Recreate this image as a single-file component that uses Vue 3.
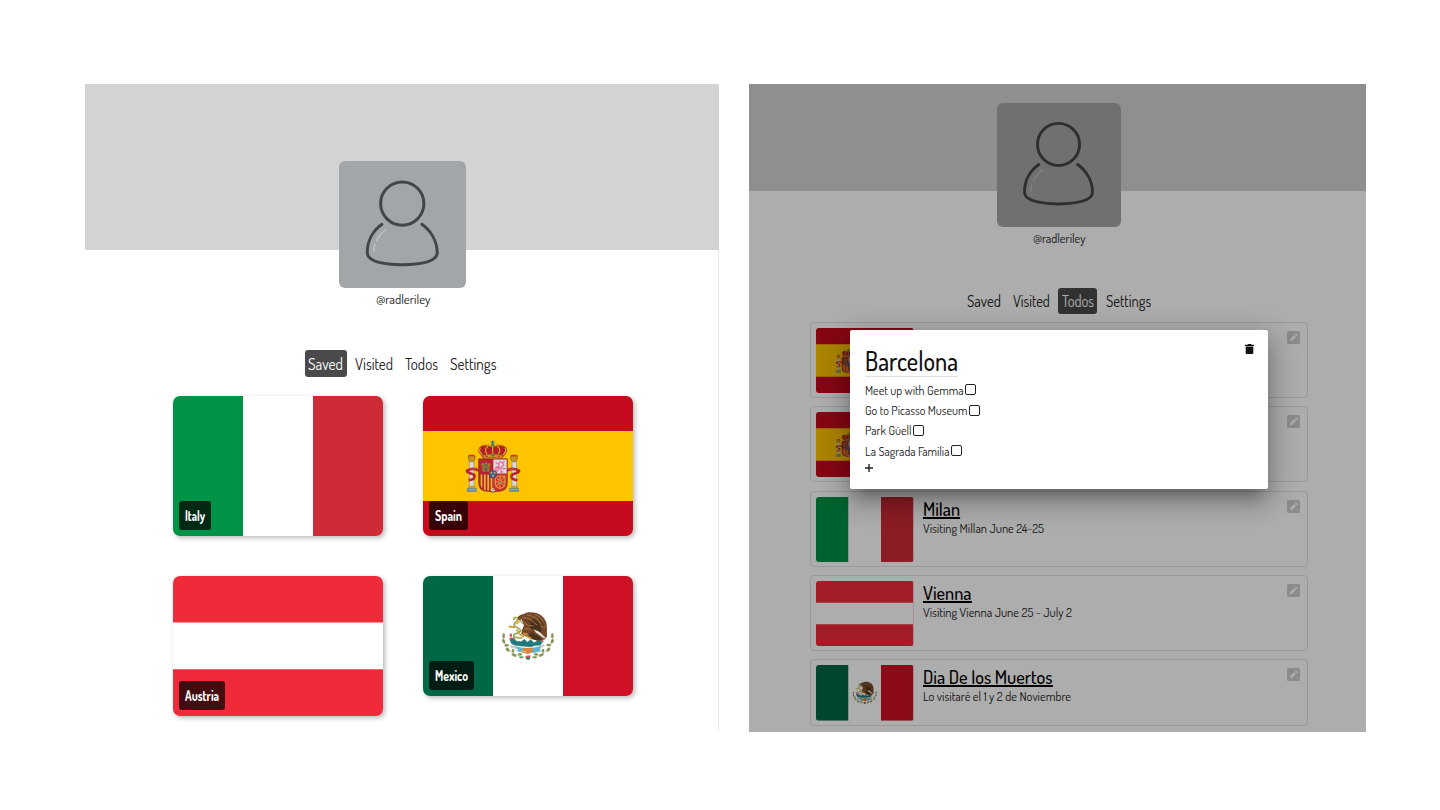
<script setup>
const tabs = [
  { name: 'Saved', width: 35 },
  { name: 'Visited', width: 38 },
  { name: 'Todos', width: 33 },
  { name: 'Settings', width: 46.5 },
]
const countries = [
  { name: 'Italy', flag: 'italy', width: 20 },
  { name: 'Spain', flag: 'spain', width: 27 },
  { name: 'Austria', flag: 'austria', width: 34 },
  { name: 'Mexico', flag: 'mexico', width: 33 },
]
const trips = [
  { flag: 'spain' },
  { flag: 'spain' },
  { flag: 'italy', title: 'Milan', tw: 37, note: 'Visiting Millan June 24-25', nw: 121 },
  { flag: 'austria', title: 'Vienna', tw: 48.5, note: 'Visiting Vienna June 25 - July 2', nw: 149 },
  { flag: 'mexico', title: 'Dia De los Muertos', tw: 129.5, note: 'Lo visitaré el 1 y 2 de Noviembre', nw: 148 },
]
const todos = [
  { text: 'Meet up with Gemma', width: 98.5 },
  { text: 'Go to Picasso Museum', width: 102.5 },
  { text: 'Park Güell', width: 46.5 },
  { text: 'La Sagrada Familia', width: 84.5 },
]

// Condenses a label so that it takes exactly the given width.
const vFit = {
  mounted(el, { value }) {
    const natural = el.getBoundingClientRect().width
    el.style.transform = `scaleX(${value / natural})`
    el.style.marginRight = `${value - natural}px`
  },
}
</script>

<template>
  <div class="stage">
    <svg class="defs" width="0" height="0">
      <symbol id="italy" viewBox="0 0 210 140" preserveAspectRatio="none">
        <path fill="#009246" d="M0 0h70v140H0z" /><path fill="#fff" d="M70 0h70v140H70z" /><path fill="#ce2b37" d="M140 0h70v140h-70z" />
      </symbol>
      <symbol id="austria" viewBox="0 0 210 140" preserveAspectRatio="none">
        <path fill="#ef2b3a" d="M0 0h210v140H0z" /><path fill="#fff" d="M0 46.6h210v46.6H0z" />
      </symbol>
      <symbol id="spain" viewBox="0 0 210 140">
        <path fill="#c60b1e" d="M0 0h210v140H0z" /><path fill="#ffc400" d="M0 35h210v70H0z" />
        <g transform="translate(-13 -11.5) scale(.33333)">
          <path fill="#c8961d" stroke="#7c4f14" stroke-width="2" d="M175 214h20v7l-4 10h-12l-4-10zM302 214h20v7l-4 10h-12l-4-10z" />
          <path fill="#c7372f" d="M177 211h16v4h-16zM304 211h16v4h-16z" />
          <path fill="#d9d9dc" stroke="#8f8f98" stroke-width="2" d="M178 232h14v74h-14zM306 232h14v74h-14z" />
          <path fill="#c29a3b" d="M174 304h22v8h-22zM302 304h22v8h-22z" />
          <path fill="#527fa6" d="M171 311h29v11h-29zM298 311h29v11h-29z" />
          <path fill="#b4d3d8" d="M173 315h25v2h-25zM300 315h25v2h-25z" />
          <path fill="none" stroke="#b6252c" stroke-width="8" d="M207 259c-9-9-28-7-36 0 2 12 26 4 22 20-2 5-11 7-17 8M291 259c9-9 28-7 36 0-2 12-26 4-22 20 2 5 11 7 17 8" />
          <path fill="none" stroke="#e48b62" stroke-width="1.5" d="M205 255c-9-3-18-3-27 2M293 255c9-3 18-3 27 2M193 277l-13 8M305 277l13 8" />
          <path fill="#b51f2b" stroke="#a8701f" stroke-width="2" d="M217 218c-5-9-14-15-10-26 7-14 27-8 40-5 13-3 34-9 43 5 4 10-5 17-11 26z" />
          <path fill="none" stroke="#dba62a" stroke-width="3.5" d="M218 213c-9-11-13-17-6-23M232 211c-8-12-7-20 2-25M248 211v-29M264 211c8-12 7-20-2-25M278 213c9-11 13-17 6-23" />
          <path fill="none" stroke="#8d3d24" stroke-width="2" stroke-dasharray="2 3" d="M212 188c8-11 26-9 35-4 10-5 28-7 37 4" />
          <path fill="#3b8174" d="M244 177h8v8h-8zM246 168h4v12h-4zM242 171h12v4h-12z" />
          <path fill="#cf9423" stroke="#8f4f21" stroke-width="2" d="M219 212q29-7 60 0l-3 10q-28-6-54 0z" />
          <path fill="#c1282c" d="M227 214h7v3h-7zM263 214h7v3h-7z" /><path fill="#28855a" d="M244 211h9v4h-9z" />
          <path fill="#b52530" stroke="#8b3422" stroke-width="2" d="M206 223h86v72q0 23-21 25-14 0-22 3-8-3-22-3-21-2-21-25z" />
          <path fill="#ded8df" d="M250 225h40v42h-40z" />
          <path fill="#edb727" d="M212 270h5v41l-5-8zM222 270h5v47l-5-1zM232 270h5v48h-5zM242 270h5v47l-5 1z" />
          <path fill="#c93635" d="M250 269h40v27q-1 19-21 22-13-1-19-7z" />
          <path fill="none" stroke="#e2a437" stroke-width="3" d="M256 275h29v23q-2 13-15 14-13-2-14-13zM256 275l29 31M285 275l-28 32M270 274v39M255 292h31" />
          <circle cx="270" cy="292" r="3" fill="#388b55" />
          <path fill="#8f7531" stroke="#c89129" stroke-width="1.5" d="M218 260v-13l-3-4v-6h5v4h5v-6h6v6h5v-4h4v6l-3 4v13z" />
          <path fill="#315d83" d="M223 241h10v3h-10zM226 250h5v10h-5z" />
          <path fill="none" stroke="#df769e" stroke-width="4" d="M257 234l8 5 5-7 8 2 3 8-8 6 8 5 6-1M266 239l2 11-11-4M269 249l-6 10-7-3M272 252l1 11 7-1M254 252l10-2M278 238l5-8" />
          <circle cx="249" cy="269" r="12" fill="#285fa5" stroke="#ae2938" stroke-width="2" />
          <path fill="#e6b737" d="M244 260l3 5-3 4-3-4zM254 260l3 5-3 4-3-4zM249 269l3 5-3 5-3-5z" />
          <path fill="#e8e1d7" d="M242 318l7-8 7 8-7 4z" /><path fill="#38865a" d="M247 314h4v4h-4z" />
        </g>
      </symbol>
      <symbol id="mexico" viewBox="0 0 210 120">
        <path fill="#006847" d="M0 0h70v120H0z" /><path fill="#fff" d="M70 0h70v120H70z" /><path fill="#ce1126" d="M140 0h70v120h-70z" />
        <g transform="translate(-13 -11) scale(.33333)">
          <path fill="none" stroke="#b3b787" stroke-width="2" d="M281 208c-4 34 20 61 60 69M427 208c4 34-20 61-60 69" />
          <g fill="#8a955a">
            <ellipse cx="281" cy="212" rx="4" ry="8" /><ellipse cx="281" cy="229" rx="4.5" ry="7" transform="rotate(-30 281 229)" /><ellipse cx="290" cy="241" rx="7" ry="4" /><ellipse cx="293" cy="254" rx="7" ry="4.5" transform="rotate(40 293 254)" /><ellipse cx="309" cy="257" rx="4" ry="6" /><ellipse cx="312" cy="270" rx="8" ry="4.5" transform="rotate(25 312 270)" /><ellipse cx="330" cy="268" rx="6" ry="4" /><ellipse cx="334" cy="277" rx="7" ry="3.5" />
            <ellipse cx="427" cy="212" rx="4" ry="8" /><ellipse cx="427" cy="229" rx="4.5" ry="7" transform="rotate(30 427 229)" /><ellipse cx="416" cy="240" rx="7" ry="4" /><ellipse cx="415" cy="254" rx="7" ry="4.5" transform="rotate(-40 415 254)" /><ellipse cx="399" cy="257" rx="4" ry="6" /><ellipse cx="394" cy="270" rx="8" ry="4.5" transform="rotate(-25 394 270)" /><ellipse cx="378" cy="268" rx="6" ry="4" /><ellipse cx="374" cy="277" rx="7" ry="3.5" />
          </g>
          <path fill="#c4d0c8" d="M303 240q50 18 98-2l4 6q-54 24-105 3z" />
          <path fill="#1e7d7c" stroke="#17635f" stroke-width="1.5" d="M302 219q13-1 17 10l15 1 9-7 9 9 10-8 10 10 12-8 12 4-4 10-15 1-15 4-28-2-18-2-11-5-5-11z" />
          <path fill="#58b6d3" d="M314 244l22 5h35l23-5-5 12 8 2-23 5H340l-23-5 9-3z" />
          <path fill="#dc843d" d="M338 249h31l-2 13-13 5-16-4z" /><path fill="#e7ba56" d="M333 258h16v4h-16z" />
          <path fill="#dc5260" d="M299 206h7v9h-7zM296 220l8-3v8zM309 217h6v7h-6zM397 226l5 4-7 3zM347 272l14-1-3 13h-8z" />
          <path fill="#2b8a62" d="M345 274l8 5 9-5-3 9h-10z" />
          <path fill="#74492a" d="M323 157c4-9 19-9 26-14 25-5 49 4 58 25 6 14 3 32 4 46l-5 9-20 4-24-5-16-9-12-6 2-12 6-14-5-13-13-3z" />
          <path fill="#49321f" d="M367 161q18 4 25 25l2 17-20-9-14-2 1-14zM358 205l22 4 20 18-22-1-18-9z" />
          <path fill="none" stroke="#a07242" stroke-width="3" d="M337 157l23 5 22 19M351 150q28 3 44 28M375 147q18 9 26 25M341 174l15 8 18 1M343 191l20 2M394 185l13 1" />
          <path fill="none" stroke="#33251a" stroke-width="2" d="M345 164l17 8 14 17M388 160l13 24M362 200l13 8M331 169l11 9" />
          <path fill="#e9e2d8" d="M371 193l18 8 22 22-14-6-20-15z" />
          <path fill="none" stroke="#9caa55" stroke-width="5" d="M311 165c2-11 13-9 12-1-3 8-12 8-11 16 2 9 18 8 20 16 0 9-13 7-20 13-5 7 9 10 25 10" />
          <path fill="none" stroke="#cf9b2f" stroke-width="5" d="M319 177q5-7 8-6M296 185q15 2 20 1M319 194l10 8M327 206l15 10M350 213l14 8M339 205l14 4" />
          <path fill="#e4b840" d="M318 169l10-4 2 7-8 3-7 6z" /><circle cx="334" cy="165" r="2" fill="#fff" />
        </g>
      </symbol>
      <symbol id="person" viewBox="57 30 383 383">
        <g fill="none" stroke="#444548" stroke-width="9" stroke-linecap="round">
          <circle cx="247" cy="158" r="65" />
          <path d="M186 220C158 240 141 272 142 307Q145 340 247 342Q349 340 352 307C352 272 334 240 306 220" />
        </g>
        <path d="M198 236Q178 252 170 270M165 281Q160 293 161 303" fill="none" stroke="#bfc3c5" stroke-width="4" stroke-linecap="round" />
      </symbol>
    </svg>

    <section class="panel saved">
      <header class="banner" />
      <div class="avatar"><svg><use href="#person" /></svg></div>
      <div class="handle"><span v-fit="54.5" class="fit">@radleriley</span></div>
      <nav>
        <a v-for="t in tabs" :key="t.name" :class="{ active: t.name === 'Saved' }"><span v-fit="t.width" class="fit">{{ t.name }}</span></a>
      </nav>
      <div class="grid">
        <article v-for="c in countries" :key="c.name" class="country" :class="c.flag">
          <svg><use :href="'#' + c.flag" /></svg>
          <span class="tag"><span v-fit="c.width" class="fit">{{ c.name }}</span></span>
        </article>
      </div>
    </section>

    <section class="panel trips">
      <header class="banner" />
      <div class="avatar"><svg><use href="#person" /></svg></div>
      <div class="handle"><span v-fit="52.5" class="fit">@radleriley</span></div>
      <nav>
        <a v-for="t in tabs" :key="t.name" :class="{ active: t.name === 'Todos' }"><span v-fit="t.width * 0.97" class="fit">{{ t.name }}</span></a>
      </nav>
      <div class="list">
        <article v-for="(t, i) in trips" :key="i" class="trip" :class="t.flag">
          <svg class="flag"><use :href="'#' + t.flag" /></svg>
          <div v-if="t.title" class="info">
            <h3><span v-fit="t.tw" class="fit">{{ t.title }}</span></h3>
            <p><span v-fit="t.nw" class="fit">{{ t.note }}</span></p>
          </div>
          <svg class="edit" viewBox="0 0 13 13">
            <rect width="13" height="13" rx="1.6" fill="#cecece" />
            <path d="M2.8 10.3l.5-2.3 3.9-3.9 1.8 1.8-3.9 3.9zM7.8 3.5l.8-.8q.4-.3.8 0l1 1q.3.4 0 .8l-.8.8z" fill="#fff" />
          </svg>
        </article>
      </div>
      <div class="overlay">
        <div class="modal">
          <div class="body">
            <h2><span v-fit="93" class="fit">Barcelona</span></h2>
            <div v-for="t in todos" :key="t.text" class="todo">
              <span v-fit="t.width" class="fit">{{ t.text }}</span><i class="box" />
            </div>
            <svg class="plus" viewBox="0 0 8 8"><path d="M4 0v8M0 4h8" stroke="#222" stroke-width="1.4" /></svg>
          </div>
          <svg class="trash" viewBox="0 0 9 10"><path d="M0 .7h2.5L3.1 0h2.8l.6.7H9v1.2H0zM.7 2.5h7.6V9q0 1-1 1H1.7q-1 0-1-1z" fill="#111" /></svg>
        </div>
      </div>
    </section>
  </div>
</template>

<style>
body { background: #fff; }
</style>

<style scoped>
* { box-sizing: border-box; }
.stage { display: flex; align-items: flex-start; gap: 30px; width: 1440px; height: 810px; padding: 84px 0 0 85px; overflow: hidden; font-family: Dosis, Lato, sans-serif; color: #222; }
.defs { position: absolute; }
.fit { display: inline-block; white-space: nowrap; transform-origin: left; }
.panel { position: relative; display: flex; flex-direction: column; align-items: center; background: #fff; overflow: hidden; flex: none; }
.panel svg { display: block; }
.saved { width: 634px; height: 647px; box-shadow: inset -1px 0 #ededed; }
.trips { width: 617px; height: 648px; }
.banner { width: 634px; height: 166px; background: #d3d3d3; flex: none; }
.trips .banner { width: 617px; height: 106.5px; }
.avatar { width: 127.5px; height: 127.5px; margin: -89.5px 0 0 1px; border-radius: 6px; background: #a2a6a9; z-index: 1; flex: none; }
.avatar svg { width: 100%; height: 100%; }
.trips .avatar { width: 124px; height: 124px; margin: -87.3px 0 0 2px; }
.handle { height: 20px; margin: 1px 0 0 2px; font-size: 12.8px; line-height: 20px; }
.trips .handle { margin: .8px 0 0 3px; font-size: 12.5px; }
nav { display: flex; gap: 5px; margin: 41px 0 0 1px; height: 27px; flex: none; }
nav a { padding: 0 3.5px; line-height: 27px; font-size: 16.5px; border-radius: 3px; white-space: nowrap; }
nav a.active { background: #4a4a4a; color: #fff; }
.trips nav { margin: 40px 0 0 3px; height: 26px; gap: 5px; }
.trips nav a { line-height: 26px; font-size: 16px; }
.grid { display: grid; grid-template-columns: 210px 210px; gap: 40px 39.6px; align-items: start; margin: 19px 0 0 1.6px; }
.country { position: relative; height: 140px; border-radius: 7px; box-shadow: 2px 2px 5px rgba(0, 0, 0, .28); }
.country svg { width: 210px; height: 100%; border-radius: 7px; }
.country.mexico { height: 120px; }
.tag { position: absolute; left: 6px; bottom: 6px; height: 29px; padding: 0 6px; border-radius: 3px; background: rgba(0, 0, 0, .72); color: #fff; font-weight: 700; font-size: 13.5px; line-height: 29px; white-space: nowrap; }
.list { width: 498px; margin: 8.2px 0 0 3px; display: flex; flex-direction: column; gap: 8.2px; }
.trip { display: flex; height: 76px; padding: 5px 7.5px 0 5px; border: 1px solid #e2e2e2; border-radius: 4px; flex: none; }
.trip.mexico { height: 67px; }
.flag { width: 97.5px; height: 65px; border-radius: 3px; flex: none; }
.mexico .flag { height: 55.7px; }
.edit { width: 13px; height: 13px; margin: 3px 0 0 auto; flex: none; }
.info { padding-left: 9px; }
h3 { margin: 1px 0 0; height: 20px; font-size: 19px; line-height: 22px; font-weight: 500; color: #000; }
h3 .fit { height: 21.5px; border-bottom: 2px solid #000; }
p { margin: 0; font-size: 13px; line-height: 21px; }
.overlay { position: absolute; inset: 0; padding: 246px 0 0 101px; background: rgba(0, 0, 0, .32); z-index: 2; }
.modal { display: flex; justify-content: space-between; width: 418px; height: 158.5px; padding: 15px 14.5px; border-radius: 2px; background: #fff; box-shadow: 0 11px 15px -7px rgba(0, 0, 0, .3), 0 12px 28px 3px rgba(0, 0, 0, .2), 0 5px 32px 5px rgba(0, 0, 0, .1); }
h2 { width: 93px; height: 32px; margin: 0 0 2.5px; border-bottom: 1px solid #e0e0e0; font-size: 26.5px; line-height: 32px; font-weight: 500; color: #111; }
.todo { display: flex; align-items: center; height: 20.4px; font-size: 13px; white-space: nowrap; }
.box { width: 11px; height: 11px; margin-left: 2px; border: 1.5px solid #222; border-radius: 2px; }
.plus { width: 8px; height: 8px; margin-top: 3px; }
.trash { width: 9px; height: 10px; margin-top: -1px; }
</style>
